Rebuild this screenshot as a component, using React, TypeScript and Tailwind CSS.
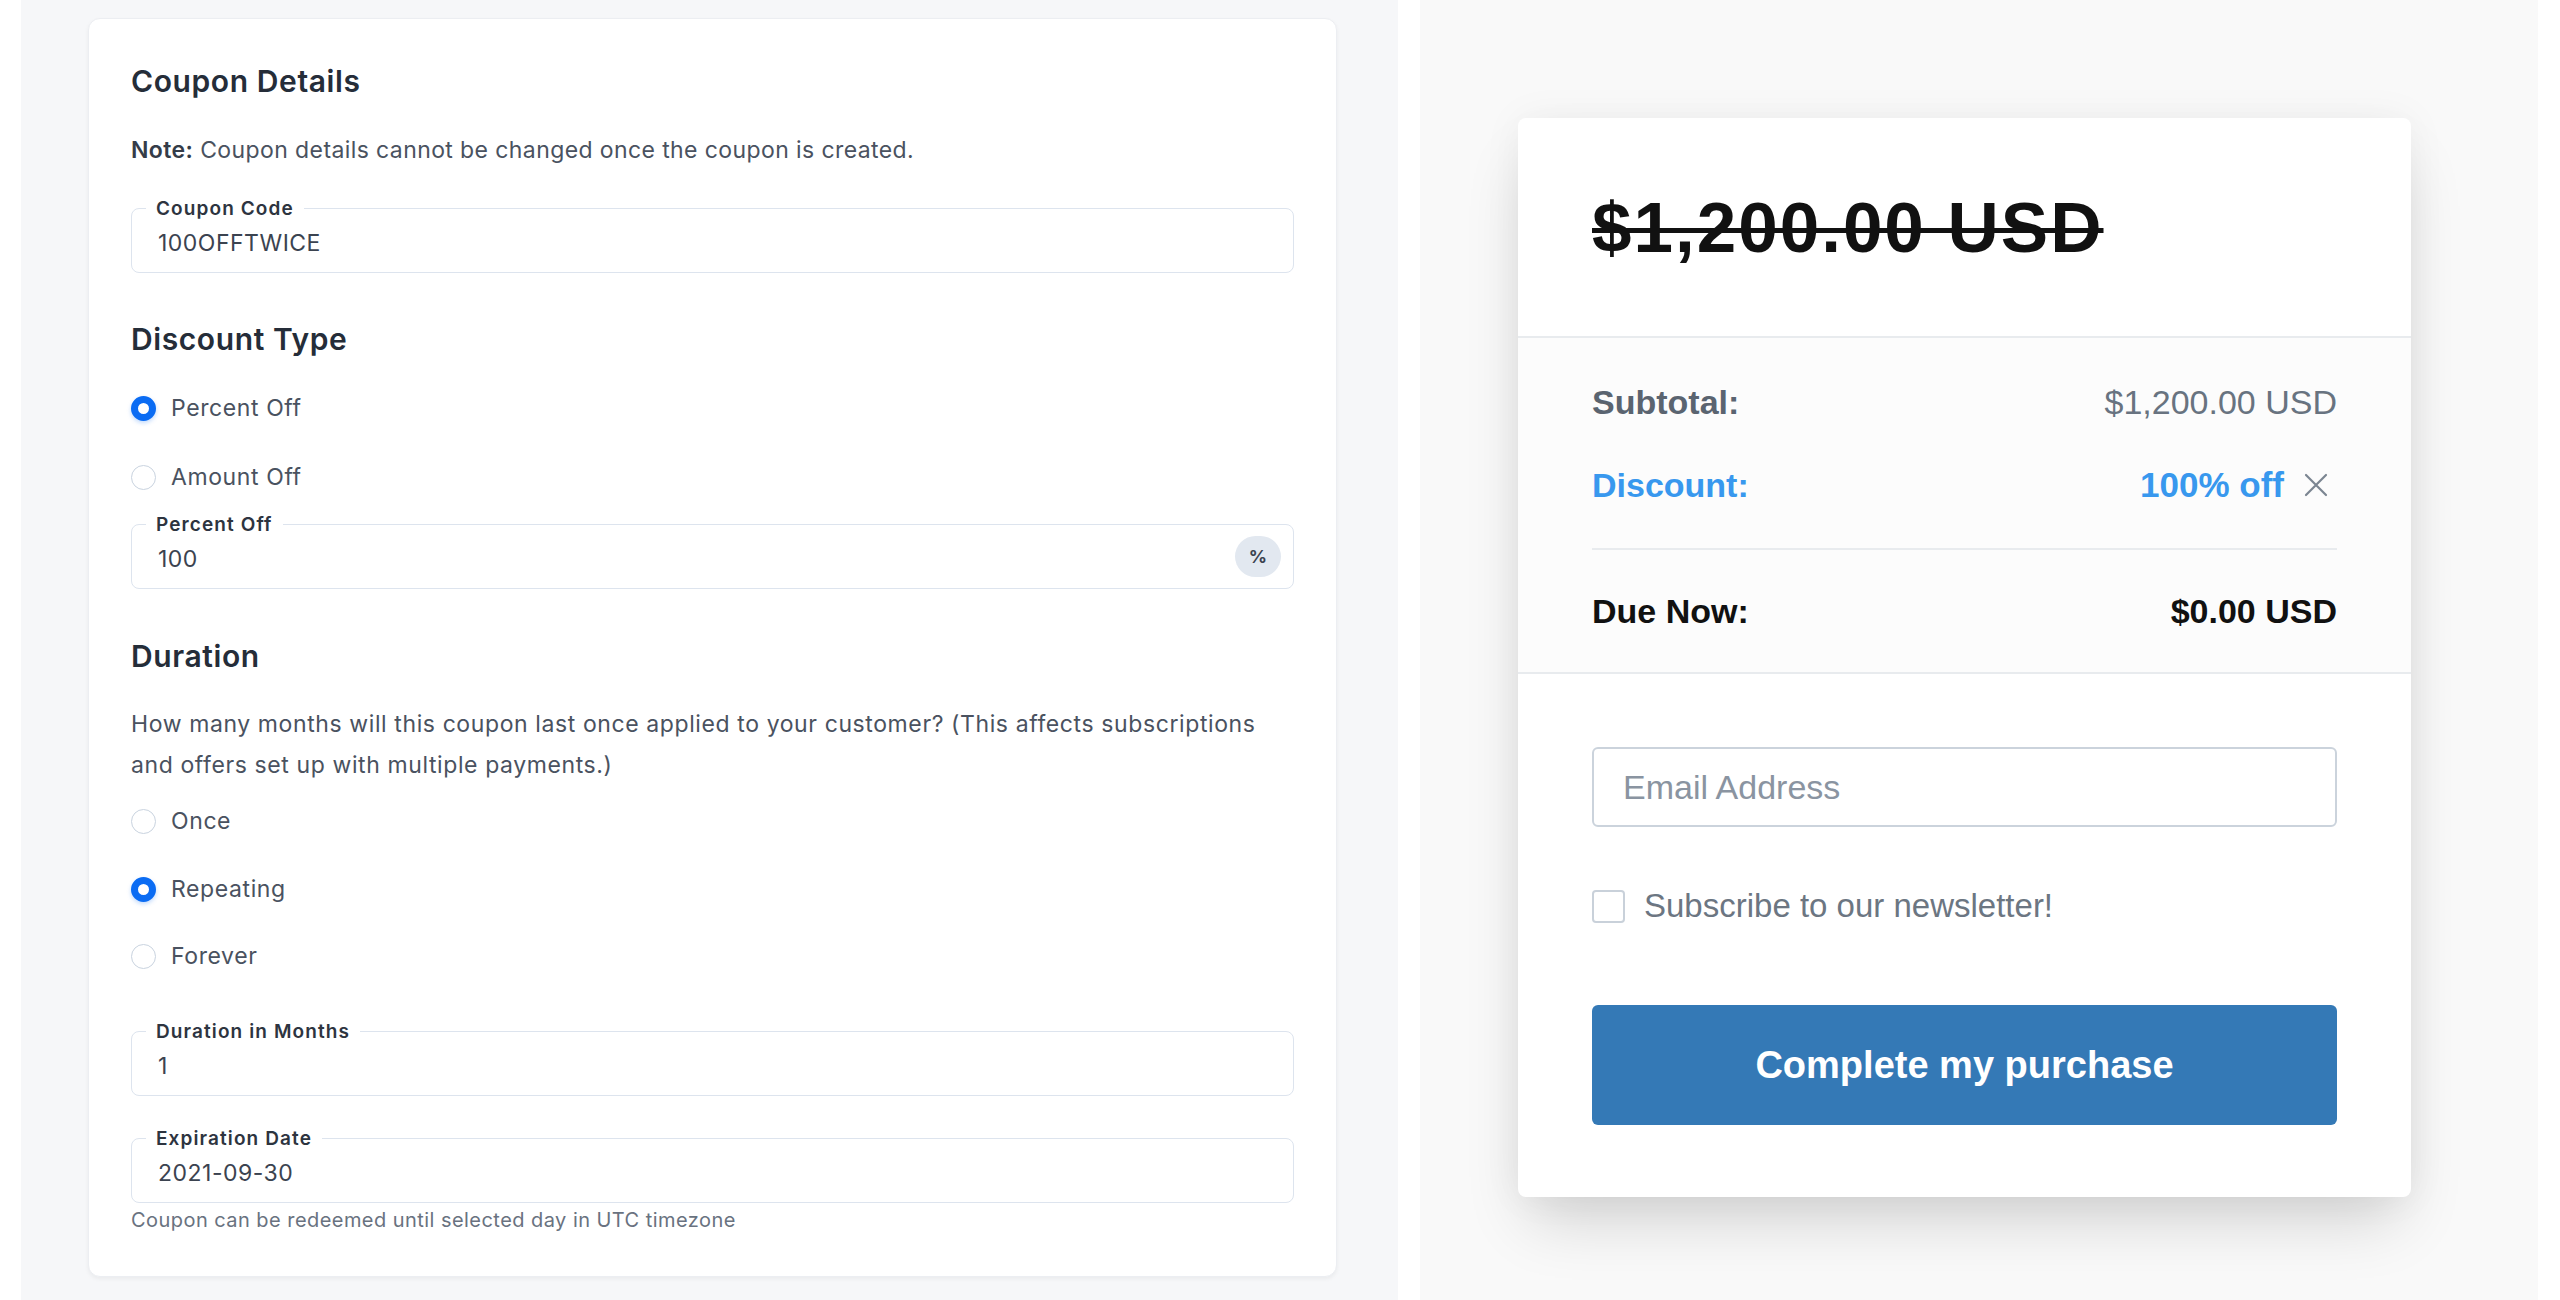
import React from 'react'

interface FieldProps {
  label: string
  value: string
  suffix?: string
}

function OutlinedField({ label, value, suffix }: FieldProps) {
  return (
    <div className="relative flex h-[65px] items-center rounded-lg border border-[#dde4ee] pl-[26px] pr-[12px]">
      <span className="absolute -top-[10px] left-[14px] bg-white px-[10px] text-[19px] font-semibold leading-[20px] tracking-[1.1px] text-[#2d3440]">
        {label}
      </span>
      <span className="mt-[4px] flex-1 text-[23px] leading-[28px] tracking-[0.5px] text-[#3b4350]">{value}</span>
      {suffix && (
        <span className="flex h-[41px] w-[46px] items-center justify-center rounded-full bg-[#e2e8f0] text-[18px] font-bold text-[#3b4350]">
          {suffix}
        </span>
      )}
    </div>
  )
}

function Radio({ label, checked, className }: { label: string; checked?: boolean; className?: string }) {
  return (
    <label className={`flex h-[30px] items-center gap-[15px] ${className ?? ''}`}>
      <span
        className={`h-[25px] w-[25px] shrink-0 rounded-full bg-white ${
          checked ? 'border-[7px] border-[#0b6cf3] shadow-[0_2px_4px_rgba(11,108,243,0.25)]' : 'border-[1.5px] border-[#c9d3df]'
        }`}
      />
      <span className="text-[23px] leading-[30px] tracking-[0.6px] text-[#4a5260]">{label}</span>
    </label>
  )
}

function SectionTitle({ children, className }: { children: React.ReactNode; className?: string }) {
  return (
    <h2 className={`h-[36px] text-[30px] font-semibold leading-[36px] tracking-[0.6px] text-[#252d39] ${className ?? ''}`}>{children}</h2>
  )
}

function CouponForm() {
  return (
    <div className="w-[1249px] rounded-xl border border-[#eceef2] bg-white px-[42px] pb-[44px] pt-[44px] font-['Inter',sans-serif] shadow-[0_2px_4px_rgba(0,0,0,0.05)]">
      <SectionTitle>Coupon Details</SectionTitle>
      <p className="mt-[36px] h-[30px] text-[23px] leading-[30px] tracking-[0.4px] text-[#4a5260]">
        <span className="font-semibold text-[#343c48]">Note:</span> Coupon details cannot be changed once the coupon is created.
      </p>
      <div className="mt-[43px]">
        <OutlinedField label="Coupon Code" value="100OFFTWICE" />
      </div>

      <SectionTitle className="mt-[48px]">Discount Type</SectionTitle>
      <Radio label="Percent Off" checked className="mt-[36px]" />
      <Radio label="Amount Off" className="mt-[39px]" />
      <div className="mt-[32px]">
        <OutlinedField label="Percent Off" value="100" suffix="%" />
      </div>

      <SectionTitle className="mt-[49px]">Duration</SectionTitle>
      <p className="mt-[30px] text-[23px] leading-[41px] tracking-[0.6px] text-[#4a5260]">
        How many months will this coupon last once applied to your customer? (This affects subscriptions and offers set up with multiple payments.)
      </p>
      <Radio label="Once" className="mt-[20px]" />
      <Radio label="Repeating" checked className="mt-[38px]" />
      <Radio label="Forever" className="mt-[37px]" />
      <div className="mt-[60px]">
        <OutlinedField label="Duration in Months" value="1" />
      </div>
      <div className="mt-[42px]">
        <OutlinedField label="Expiration Date" value="2021-09-30" />
      </div>
      <p className="mt-[5px] text-[20px] leading-[24px] tracking-[0.45px] text-[#697280]">
        Coupon can be redeemed until selected day in UTC timezone
      </p>
    </div>
  )
}

function SummaryRow({ label, value, className, children }: { label: string; value: string; className?: string; children?: React.ReactNode }) {
  return (
    <div className={`flex h-[48px] items-center justify-between text-[34px] leading-[48px] ${className ?? ''}`}>
      <span className="font-bold">{label}</span>
      <span className="flex items-center gap-[20px]">
        {value}
        {children}
      </span>
    </div>
  )
}

function Checkout() {
  return (
    <div className="w-[893px] overflow-hidden rounded-lg bg-white font-['Liberation_Sans',Arial,sans-serif] shadow-[0_34px_60px_-12px_rgba(0,0,0,0.16),0_0_40px_rgba(0,0,0,0.05)]">
      <div className="flex h-[218px] items-center px-[74px]">
        <span className="text-[71px] font-bold leading-none tracking-[2px] text-[#111] line-through decoration-[length:5px]">
          $1,200.00 USD
        </span>
      </div>

      <div className="border-y-2 border-[#e8ebee] bg-[#fcfcfc] px-[74px] pb-[37px] pt-[40px]">
        <SummaryRow label="Subtotal:" value="$1,200.00 USD" className="text-[#687380] [&>span:first-child]:text-[#5a6470]" />
        <SummaryRow
          label="Discount:"
          value="100% off"
          className="mt-[35px] text-[#3898ee] [&>span:last-child]:pr-[9px] [&>span:last-child]:text-[35px] [&>span:last-child]:font-bold"
        >
          <svg width="24" height="24" viewBox="0 0 24 24" fill="none" stroke="#7b8591" strokeWidth="2.2" strokeLinecap="round">
            <path d="M2 2l20 20M22 2L2 22" />
          </svg>
        </SummaryRow>
        <div className="mt-[39px] border-t-2 border-[#e8ebee]" />
        <SummaryRow label="Due Now:" value="$0.00 USD" className="mt-[37px] text-[#111] [&>span:last-child]:font-bold" />
      </div>

      <div className="px-[74px] pb-[72px] pt-[73px]">
        <div className="flex h-[80px] items-center rounded-md border-2 border-[#cbd3dc] px-[29px] text-[34px] text-[#8a94a1]">
          Email Address
        </div>
        <label className="mt-[60px] flex h-[38px] items-center gap-[19px]">
          <span className="h-[33px] w-[33px] rounded-[4px] border-2 border-[#c9d1da] bg-white" />
          <span className="text-[33px] leading-[38px] text-[#6c7682]">Subscribe to our newsletter!</span>
        </label>
        <button className="mt-[80px] flex h-[120px] w-full items-center justify-center rounded-md bg-[#3479b6] text-[38px] font-bold text-white">
          Complete my purchase
        </button>
      </div>
    </div>
  )
}

export default function App() {
  return (
    <div className="flex h-[1300px] w-[2560px] overflow-hidden bg-white">
      <div className="ml-[21px] w-[1377px] bg-[#f6f7f9] pl-[67px] pt-[18px]">
        <CouponForm />
      </div>
      <div className="ml-[22px] w-[1118px] bg-[#f9f9f9] pl-[98px] pt-[118px]">
        <Checkout />
      </div>
    </div>
  )
}
